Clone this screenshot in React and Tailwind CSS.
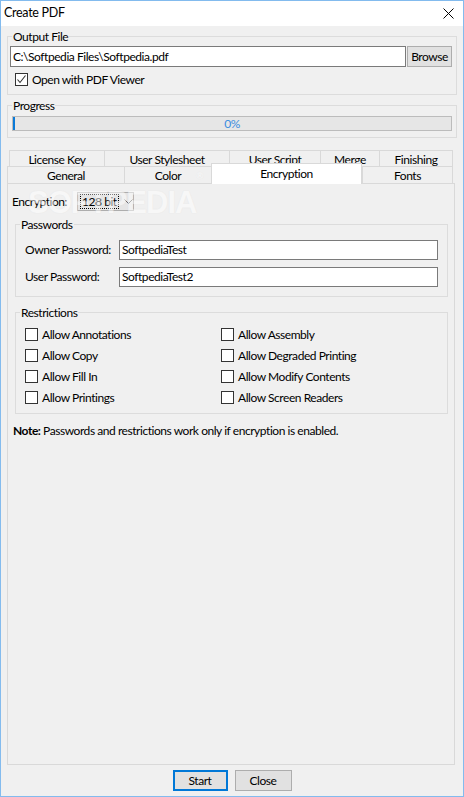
import { useState } from 'react';

function Check({ checked }) {
    return (
        <span className="w-[13px] h-[13px] shrink-0 border border-[#333333] bg-white flex items-center justify-center">
            {checked && (
                <svg width="11" height="11" viewBox="0 0 11 11">
                    <path d="M1.5 5.5 L4 8.5 L9.5 1.5" fill="none" stroke="#333333" strokeWidth="1.1" />
                </svg>
            )}
        </span>
    );
}

function Group({ label, className, children }) {
    return (
        <fieldset className={`border border-[#dcdcdc] min-w-0 ${className}`}>
            <legend className="ml-[4px] px-[1px] leading-[15px]">{label}</legend>
            {children}
        </fieldset>
    );
}

function Tab({ label, w, selected, last }) {
    if (selected) {
        return (
            <div className={`${w} h-[21px] -mt-[3px] -mb-[1px] relative z-10 bg-white border-t border-l border-r border-[#d9d9d9] text-center leading-[19px]`}>
                {label}
            </div>
        );
    }
    return (
        <div className={`${w} h-full bg-[#f0f0f0] border-t border-l border-[#d9d9d9] ${last ? 'border-r' : ''} text-center leading-[17px] overflow-hidden`}>
            {label}
        </div>
    );
}

export default function App() {
    const [viewer] = useState(true);

    const restrictions = [
        ['Allow Annotations', 'Allow Assembly'],
        ['Allow Copy', 'Allow Degraded Printing'],
        ['Allow Fill In', 'Allow Modify Contents'],
        ['Allow Printings', 'Allow Screen Readers'],
    ];

    return (
        <div className="w-[464px] h-[797px] flex flex-col border border-[#83bbee] bg-[#f0f0f0] font-['Lato',sans-serif] text-[12px] tracking-[-0.45px] text-black">
            {/* Title bar */}
            <div className="h-[25px] shrink-0 bg-white flex items-center justify-between pl-[3px] pr-[9px]">
                <span className="text-[12.5px] tracking-[-0.3px]">Create PDF</span>
                <svg width="11" height="11" viewBox="0 0 11 11">
                    <path d="M0.5 0.5 L10.5 10.5 M10.5 0.5 L0.5 10.5" stroke="#000" strokeWidth="1" />
                </svg>
            </div>

            <div className="flex-1 flex flex-col px-[6px] min-h-0">
                {/* Output file */}
                <Group label="Output File" className="mt-[3px]">
                    <div className="pl-[2px] pr-[4px] pt-[2px] pb-[8px]">
                        <div className="flex h-[21px]">
                            <div className="flex-1 bg-white border border-[#7a7a7a] px-[2px] leading-[19px]">
                                C:\Softpedia Files\Softpedia.pdf
                            </div>
                            <button className="w-[45px] ml-[1px] bg-[#e1e1e1] border border-[#adadad] leading-[19px]">Browse</button>
                        </div>
                        <label className="flex items-center gap-[4px] ml-[5px] mt-[6px] leading-[13px]">
                            <Check checked={viewer} />
                            <span>Open with PDF Viewer</span>
                        </label>
                    </div>
                </Group>

                {/* Progress */}
                <Group label="Progress" className="mt-[3px]">
                    <div className="px-[4px] pt-[3px] pb-[6px]">
                        <div className="relative h-[15px] bg-[#e6e6e6] border border-[#bcbcbc] flex items-center justify-center">
                            <div className="absolute left-0 top-0 bottom-0 w-[2px] bg-[#0a7ad8]" />
                            <span className="text-[#3b8de0] leading-[13px]">0%</span>
                        </div>
                    </div>
                </Group>

                {/* Tabs */}
                <div className="w-[448px] mt-[12px] flex-1 flex flex-col min-h-0">
                    <div className="flex h-[16px] ml-[2px]">
                        <Tab label="License Key" w="w-[95px]" />
                        <Tab label="User Stylesheet" w="w-[125px]" />
                        <Tab label="User Script" w="w-[91px]" />
                        <Tab label="Merge" w="w-[59px]" />
                        <Tab label="Finishing" w="w-[74px]" last />
                    </div>
                    <div className="flex h-[17px]">
                        <Tab label="General" w="w-[117px]" />
                        <Tab label="Color" w="w-[87px]" />
                        <Tab label="Encryption" w="w-[151px]" selected />
                        <Tab label="Fonts" w="w-[91px]" last />
                    </div>

                    <div className="relative flex-1 border border-[#d9d9d9] bg-[#f0f0f0] pl-[4px] pt-[8px]">
                        <div className="flex items-center h-[19px]">
                            <span className="w-[65px]">Encryption:</span>
                            <div className="w-[57px] h-[19px] border border-[#adadad] bg-[#e5e5e5] flex items-center pl-[2px] whitespace-nowrap">
                                <span className="border border-dotted border-black px-[1px] leading-[13px]">128 bit</span>
                                <svg className="ml-[5px] shrink-0" width="9" height="6" viewBox="0 0 9 6">
                                    <path d="M0.5 0.5 L4.5 4.5 L8.5 0.5" fill="none" stroke="#606060" strokeWidth="1" />
                                </svg>
                            </div>
                        </div>

                        <div className="absolute left-[20px] top-[-4px] pointer-events-none font-['Liberation_Sans',sans-serif] font-bold text-[31px] tracking-[-1px] text-white opacity-50 [text-shadow:0_0_1px_#d8d8d8]">
                            SOFTPEDIA<sup className="text-[9px] align-top">®</sup>
                        </div>

                        <Group label="Passwords" className="w-[433px] ml-[3px] mt-[6px]">
                            <div className="pl-[9px] pr-[9px] pt-[8px] pb-[9px] flex flex-col gap-[7px]">
                                <div className="flex items-center">
                                    <span className="w-[94px]">Owner Password:</span>
                                    <div className="flex-1 h-[20px] bg-white border border-[#7a7a7a] px-[2px] leading-[18px]">SoftpediaTest</div>
                                </div>
                                <div className="flex items-center">
                                    <span className="w-[94px]">User Password:</span>
                                    <div className="flex-1 h-[20px] bg-white border border-[#7a7a7a] px-[2px] leading-[18px]">SoftpediaTest2</div>
                                </div>
                            </div>
                        </Group>

                        <Group label="Restrictions" className="w-[433px] ml-[3px] mt-[8px]">
                            <div className="pl-[9px] pt-[8px] pb-[9px] flex flex-col gap-[8px]">
                                {restrictions.map(([a, b]) => (
                                    <div key={a} className="flex h-[13px] leading-[13px]">
                                        <label className="w-[196px] flex items-center gap-[4px]">
                                            <Check />
                                            <span>{a}</span>
                                        </label>
                                        <label className="flex items-center gap-[4px]">
                                            <Check />
                                            <span>{b}</span>
                                        </label>
                                    </div>
                                ))}
                            </div>
                        </Group>

                        <p className="mt-[9px] ml-[1px] leading-[15px]">
                            <span className="font-bold">Note:</span> Passwords and restrictions work only if encryption is enabled.
                        </p>
                    </div>
                </div>

                {/* Buttons */}
                <div className="flex justify-center gap-[7px] mt-[5px] mb-[5px]">
                    <button className="w-[55px] h-[21px] bg-[#e1e1e1] border-2 border-[#0078d7] leading-[17px]">Start</button>
                    <button className="w-[57px] h-[21px] bg-[#e1e1e1] border border-[#adadad] leading-[19px]">Close</button>
                </div>
            </div>
        </div>
    );
}
